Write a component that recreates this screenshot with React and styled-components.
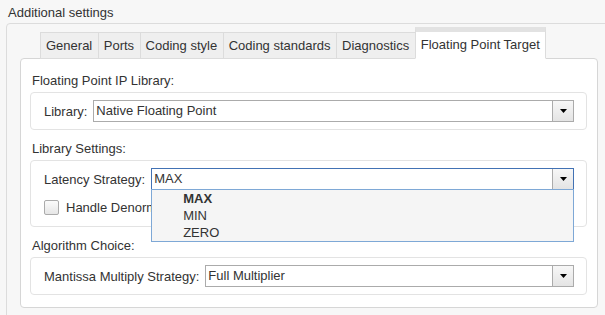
import React from "react";
import styled, { createGlobalStyle } from "styled-components";

const Global = createGlobalStyle`
  html, body { margin: 0; padding: 0; background: #f7f7f7; overflow: hidden; }
  body { font-family: "Liberation Sans", Arial, sans-serif; font-size: 13px; color: #333; }
`;

const Page = styled.div`
  padding: 5px 0 0 6px;
  width: 640px;
`;

const Title = styled.div`
  line-height: 16px;
  margin: 0 0 2px 2px;
`;

const OuterBox = styled.div`
  border: 1px solid #dcdcdc;
  border-radius: 4px;
  padding: 3px 0 0 13px;
  height: 320px;
`;

const TabRow = styled.div`
  display: flex;
  align-items: flex-end;
  margin-left: 20px;
  position: relative;
  z-index: 1;
`;

const Tab = styled.div`
  box-sizing: border-box;
  margin-left: -1px;
  padding: 0 5.5px 0 5px;
  border: 1px solid #dcdcdc;
  background: ${(p) => (p.$active ? "#fff" : "#efefef")};
  border-top: ${(p) => (p.$active ? "5px solid #e2e2e2" : "1px solid #dcdcdc")};
  border-bottom: 1px solid ${(p) => (p.$active ? "#fff" : "#dcdcdc")};
  height: ${(p) => (p.$active ? "32px" : "27px")};
  line-height: 25px;
  white-space: nowrap;
  &:first-child { margin-left: 0; }
`;

const Panel = styled.div`
  box-sizing: border-box;
  width: 578px;
  margin-top: -1px;
  background: #fff;
  border: 1px solid #d6d6d6;
  border-radius: 4px;
  padding: 14px 10px 12px 9px;
  display: flex;
  flex-direction: column;
`;

const Section = styled.div`
  display: flex;
  flex-direction: column;
  gap: 3px;
  & + & { margin-top: 11px; }
`;

const SectionLabel = styled.div`
  line-height: 16px;
  margin-left: 2px;
`;

const GroupBox = styled.div`
  border: 1px solid #e3e3e3;
  border-radius: 4px;
  padding: 7px 12px 7px 13px;
  display: flex;
  flex-direction: column;
  gap: 5px;
`;

const Row = styled.div`
  display: flex;
  align-items: center;
  gap: 6px;
  min-height: ${(p) => p.$h || "auto"};
`;

const FieldLabel = styled.span`
  white-space: nowrap;
`;

const SelectBox = styled.div`
  position: relative;
  flex: 1;
  height: 22px;
  box-sizing: border-box;
  display: flex;
  border: 1px solid ${(p) => (p.$focus ? "#4272b4" : "#ababab")};
  background: #fff;
`;

const SelectValue = styled.div`
  flex: 1;
  padding-left: 2px;
  line-height: 20px;
  white-space: nowrap;
`;

const ArrowButton = styled.div`
  width: 20px;
  border-left: 1px solid #ababab;
  background: linear-gradient(#f7f7f7, #e4e4e4);
  display: flex;
  align-items: center;
  justify-content: center;
`;

const DropList = styled.div`
  position: absolute;
  top: 100%;
  left: -1px;
  right: -1px;
  border: 1px solid #7ea8d6;
  background: #f5f5f5;
  z-index: 5;
`;

const DropItem = styled.div`
  padding-left: 31px;
  line-height: 17px;
  font-weight: ${(p) => (p.$selected ? "bold" : "normal")};
`;

const Checkbox = styled.span`
  box-sizing: border-box;
  width: 15px;
  height: 15px;
  border: 1px solid #ababab;
  border-radius: 2px;
  background: linear-gradient(#fbfbfb, #e6e6e6);
  margin-right: 1px;
`;

const Arrow = () => (
  <svg width="7" height="4" viewBox="0 0 7 4">
    <path d="M0 0 H7 L3.5 4 Z" fill="#000" />
  </svg>
);

const Select = ({ value, focus, options }) => (
  <SelectBox $focus={focus}>
    <SelectValue>{value}</SelectValue>
    <ArrowButton>
      <Arrow />
    </ArrowButton>
    {options && (
      <DropList>
        {options.map((o) => (
          <DropItem key={o} $selected={o === value}>
            {o}
          </DropItem>
        ))}
      </DropList>
    )}
  </SelectBox>
);

const tabs = [
  "General",
  "Ports",
  "Coding style",
  "Coding standards",
  "Diagnostics",
  "Floating Point Target",
];

export default function App() {
  return (
    <Page>
      <Global />
      <Title>Additional settings</Title>
      <OuterBox>
        <TabRow>
          {tabs.map((t) => (
            <Tab key={t} $active={t === "Floating Point Target"}>
              {t}
            </Tab>
          ))}
        </TabRow>
        <Panel>
          <Section>
            <SectionLabel>Floating Point IP Library:</SectionLabel>
            <GroupBox>
              <Row>
                <FieldLabel>Library:</FieldLabel>
                <Select value="Native Floating Point" />
              </Row>
            </GroupBox>
          </Section>
          <Section>
            <SectionLabel>Library Settings:</SectionLabel>
            <GroupBox>
              <Row>
                <FieldLabel>Latency Strategy:</FieldLabel>
                <Select value="MAX" focus options={["MAX", "MIN", "ZERO"]} />
              </Row>
              <Row $h="24px">
                <Checkbox />
                <FieldLabel>Handle Denormals</FieldLabel>
              </Row>
            </GroupBox>
          </Section>
          <Section>
            <SectionLabel>Algorithm Choice:</SectionLabel>
            <GroupBox>
              <Row>
                <FieldLabel>Mantissa Multiply Strategy:</FieldLabel>
                <Select value="Full Multiplier" />
              </Row>
            </GroupBox>
          </Section>
        </Panel>
      </OuterBox>
    </Page>
  );
}
